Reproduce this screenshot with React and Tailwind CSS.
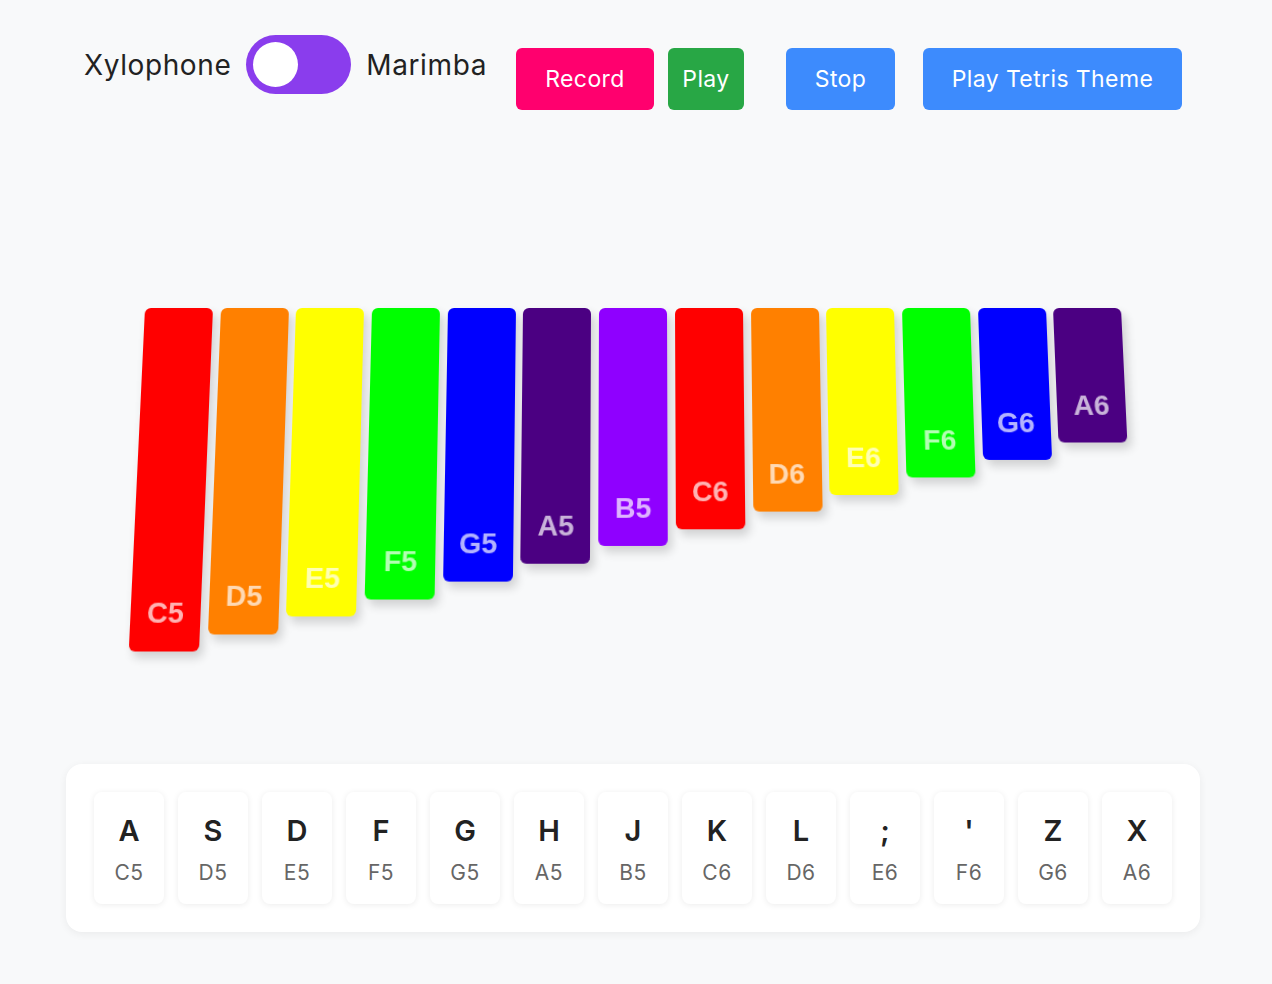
import { useState } from "react";

const BARS = [
  { note: "C5", color: "bg-[#ff0000]", h: "h-[333px]" },
  { note: "D5", color: "bg-[#ff8000]", h: "h-[317px]" },
  { note: "E5", color: "bg-[#ffff00]", h: "h-[300px]" },
  { note: "F5", color: "bg-[#00ff00]", h: "h-[284px]" },
  { note: "G5", color: "bg-[#0000ff]", h: "h-[267px]" },
  { note: "A5", color: "bg-[#4b0082]", h: "h-[250px]" },
  { note: "B5", color: "bg-[#8f00ff]", h: "h-[233px]" },
  { note: "C6", color: "bg-[#ff0000]", h: "h-[217px]" },
  { note: "D6", color: "bg-[#ff8000]", h: "h-[200px]" },
  { note: "E6", color: "bg-[#ffff00]", h: "h-[184px]" },
  { note: "F6", color: "bg-[#00ff00]", h: "h-[167px]" },
  { note: "G6", color: "bg-[#0000ff]", h: "h-[150px]" },
  { note: "A6", color: "bg-[#4b0082]", h: "h-[133px]" },
];

const KEYS = ["A", "S", "D", "F", "G", "H", "J", "K", "L", ";", "'", "Z", "X"];

function Toggle({ on, onChange }) {
  return (
    <button
      onClick={() => onChange(!on)}
      className={`w-[105px] h-[59px] rounded-full bg-[#8a3ded] flex items-center px-[7px] ${on ? "justify-end" : "justify-start"}`}
    >
      <span className="w-[45px] h-[45px] rounded-full bg-white block" />
    </button>
  );
}

export default function App() {
  const [marimba, setMarimba] = useState(false);

  return (
    <div className="min-h-screen bg-[#f8f9fa] font-['Inter',sans-serif]">
      <div className="w-[1266px]">
        {/* header controls */}
        <div className="flex justify-center items-start pt-[35px]">
          <div className="flex items-center gap-[15px] text-[28px] tracking-[0.6px] text-[#222]">
            <span>Xylophone</span>
            <Toggle on={marimba} onChange={setMarimba} />
            <span>Marimba</span>
          </div>
          <div className="flex items-center mt-[13px] ml-[29px] text-[23px] tracking-[0.4px] text-white">
            <button className="w-[138px] h-[62px] rounded-md bg-[#ff006e]">Record</button>
            <button className="w-[76px] h-[62px] rounded-md bg-[#28a745] ml-[14px]">Play</button>
            <button className="w-[109px] h-[62px] rounded-md bg-[#3d8bfd] ml-[42px]">Stop</button>
            <button className="w-[259px] h-[62px] rounded-md bg-[#3d8bfd] ml-[28px]">Play Tetris Theme</button>
          </div>
        </div>

        {/* xylophone bars */}
        <div className="mt-[198px] h-[456px] flex justify-center">
          <div className="flex items-start gap-[7.7px] origin-top [transform:perspective(600px)_rotateX(3.33deg)]">
            {BARS.map((b) => (
              <div
                key={b.note}
                className={`relative w-[68px] ${b.h} ${b.color} rounded-md shadow-[4px_6px_10px_rgba(0,0,0,0.16)]`}
              >
                <span className="absolute bottom-[20px] left-0 right-0 text-center text-[28px] leading-[32px] font-bold text-white/70 font-['Liberation_Sans',sans-serif]">
                  {b.note}
                </span>
              </div>
            ))}
          </div>
        </div>

        {/* keyboard map */}
        <div className="mx-[66px] bg-white rounded-2xl shadow-[0_2px_8px_rgba(0,0,0,0.06)] p-[28px] flex gap-[14px]">
          {KEYS.map((k, i) => (
            <div
              key={k}
              className="w-[70px] h-[112px] bg-white rounded-lg shadow-[0_1px_6px_rgba(0,0,0,0.08)] flex flex-col items-center pt-[20px]"
            >
              <span className="text-[29px] font-semibold text-[#222] leading-[38px]">{k}</span>
              <span className="text-[21px] tracking-[0.5px] text-[#666] leading-[28px] mt-[9px]">{BARS[i].note}</span>
            </div>
          ))}
        </div>
      </div>
    </div>
  );
}
